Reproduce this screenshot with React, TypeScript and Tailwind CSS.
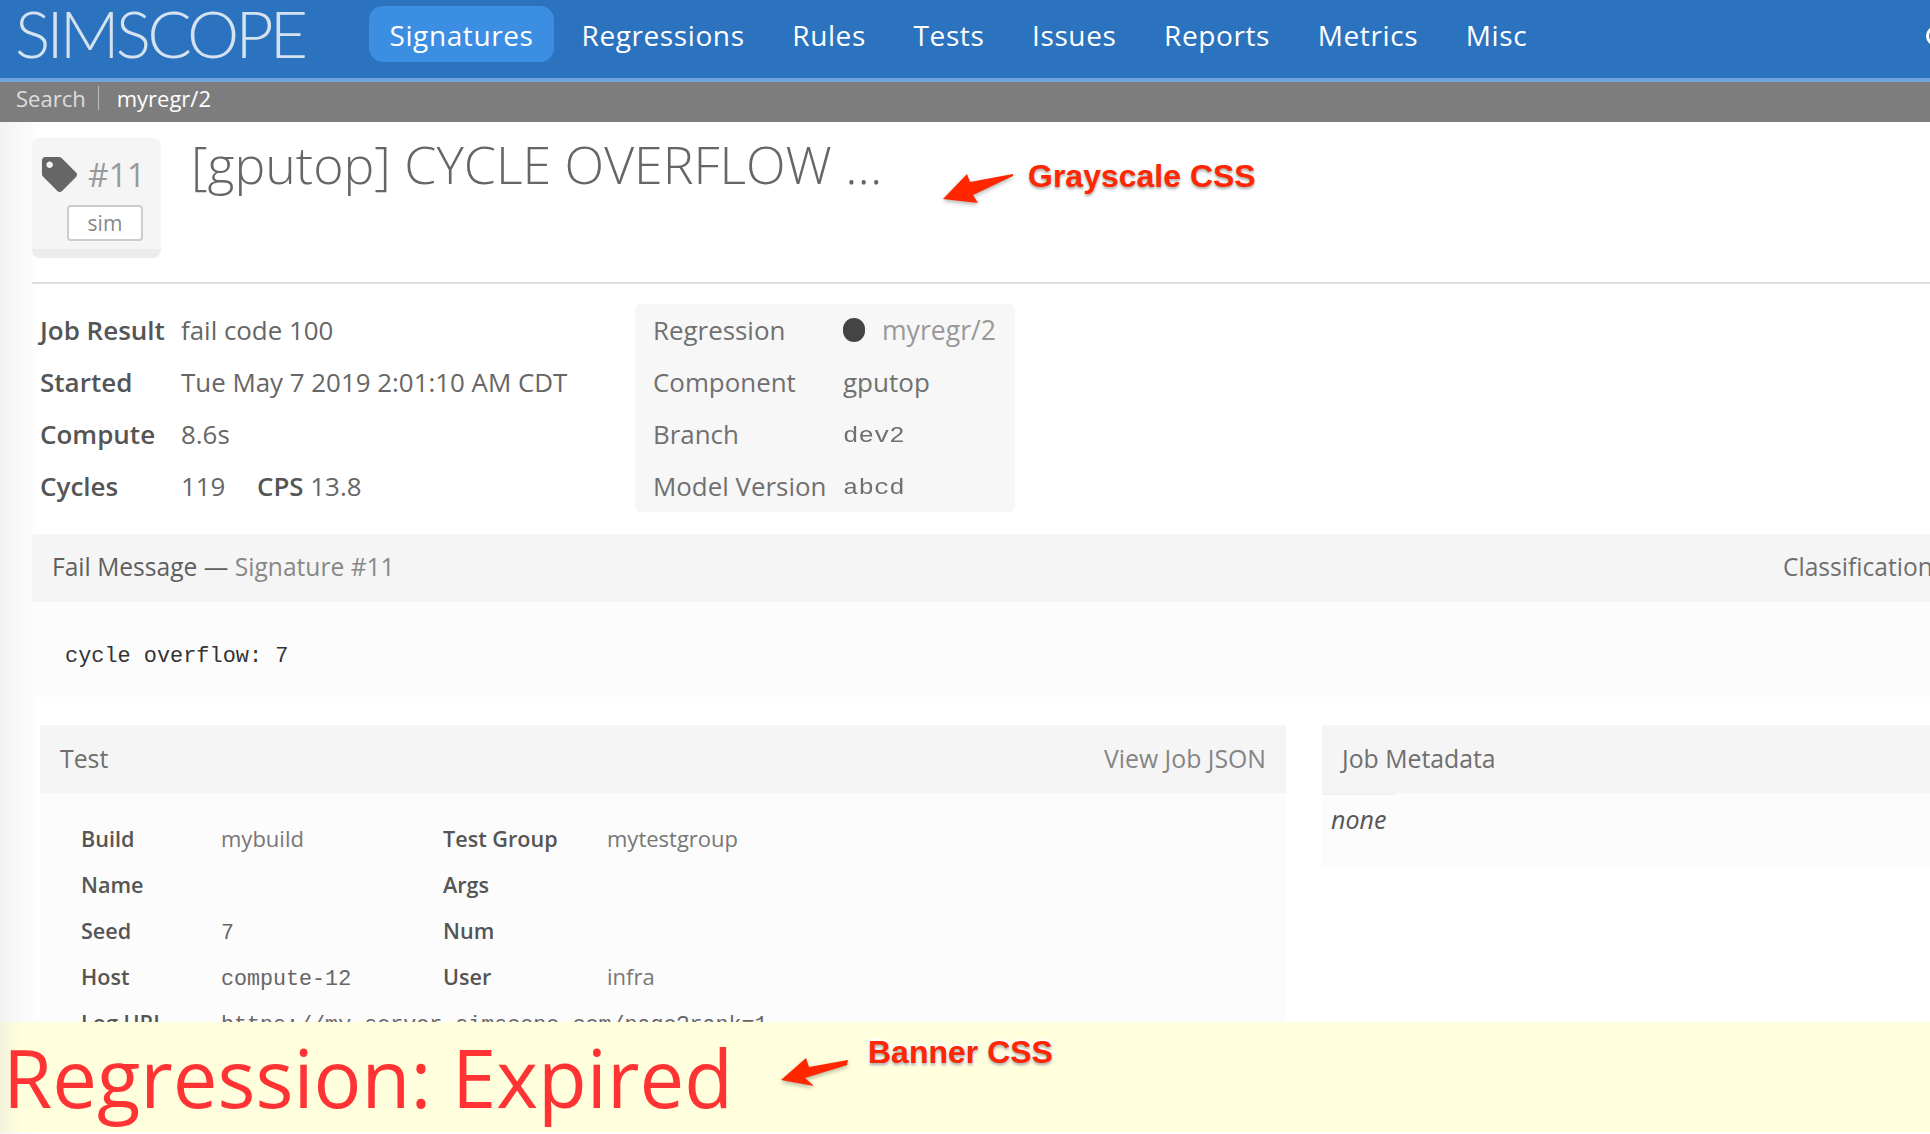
import React from "react";
import { FaTag } from "react-icons/fa";

const NAV = ["Signatures", "Regressions", "Rules", "Tests", "Issues", "Reports", "Metrics", "Misc"];

function Field({ label, children }: { label: string; children?: React.ReactNode }) {
  return (
    <div className="flex h-[52px] items-center">
      <div className="w-[141px] font-semibold text-[#555]">{label}</div>
      <div className="whitespace-nowrap pt-[1px] text-[25.9px] text-[#666]">{children}</div>
    </div>
  );
}

function Meta({ label, children }: { label: string; children?: React.ReactNode }) {
  return (
    <div className="flex h-[52px] items-center">
      <div className="w-[190px] pt-[1px] text-[25.9px] text-[#707070]">{label}</div>
      <div className="flex items-center whitespace-nowrap text-[#707070]">{children}</div>
    </div>
  );
}

function Mono({ children }: { children: string }) {
  return (
    <span className="inline-block origin-left scale-x-[1.17] pt-[6px] font-['Liberation_Mono',monospace] text-[22px]">{children}</span>
  );
}

function TestRow({ a, b, aMono }: { a: [string, string?]; b: [string, string?]; aMono?: boolean }) {
  return (
    <div className="flex h-[46px] items-center">
      <div className="flex w-[362px] items-center">
        <div className="w-[140px] shrink-0 pt-[1px] text-[21.6px] font-semibold text-[#555]">{a[0]}</div>
        {a[1] ? (
          <div className={aMono ? "whitespace-nowrap pt-[7px] font-['Liberation_Mono',monospace] text-[21.7px] text-[#666]" : "whitespace-nowrap text-[#777]"}>{a[1]}</div>
        ) : null}
      </div>
      <div className="w-[164px] pt-[1px] text-[21.6px] font-semibold text-[#555]">{b[0]}</div>
      {b[1] ? <div className="text-[#777]">{b[1]}</div> : null}
    </div>
  );
}

function Arrow({ points, className }: { points: string; className: string }) {
  return (
    <svg className={className} viewBox="0 0 80 40" fill="#ff2600" style={{ filter: "drop-shadow(0 2px 2px rgba(0,0,0,0.3))" }}>
      <polygon points={points} />
    </svg>
  );
}

const outline = "[text-shadow:0_2px_3px_rgba(0,0,0,0.35),1px_1px_0_#fff,-1px_-1px_0_#fff,1px_-1px_0_#fff,-1px_1px_0_#fff,2px_0_0_#fff,-2px_0_0_#fff,0_2px_0_#fff,0_-2px_0_#fff]";

export default function App() {
  return (
    <div className="relative h-[1134px] w-[1930px] overflow-hidden bg-white font-['Open_Sans',sans-serif] text-[26px] leading-none">
      <nav className="flex h-[82px] items-start border-b-4 border-[#70a3e0] bg-[#2b73bf] pt-[6px]">
        <div className="ml-[15px] mt-[-8px] w-[354px] font-['Lato',sans-serif] text-[66px] font-light leading-[70px] tracking-[-3.9px] text-[#d5e2ef]">SIMSCOPE</div>
        <div className="flex items-center text-[28px] tracking-[0.6px] text-white">
          {NAV.map((n, i) => (
            <div key={n} className={i === 0 ? "mr-[27.5px] flex h-[56px] w-[185px] items-center justify-center rounded-[14px] bg-[#3c8ee2] pt-[2px]" : "mr-[47.7px] flex h-[56px] items-center whitespace-nowrap pt-[2px]"}>
              {n}
            </div>
          ))}
        </div>
        <div className="absolute left-[1926px] top-[26px] h-[20px] w-[20px] rounded-full border-[3px] border-white" />
      </nav>

      <div className="flex h-[40px] items-center bg-[#7d7d7d] pb-[8px] pl-4 text-[22px]">
        <span className="text-[#ddd]">Search</span>
        <span className="ml-[12px] mr-[18px] h-[24px] w-px bg-[#bbb]" />
        <span className="text-white">myregr/2</span>
      </div>

      <main className="h-[1012px] bg-[linear-gradient(90deg,#f3f3f3_0,#ffffff_42px)] pl-8 pt-4">
        <div className="flex h-[144px] items-start gap-[30px]">
          <div className="h-[120px] w-[129px] rounded-lg border-b-[9px] border-[#ececec] bg-[#f5f5f5] pl-[10px] pt-[19px]">
            <div className="flex items-center gap-[11px]">
              <FaTag className="h-[35px] w-[35px] text-[#666]" />
              <span className="text-[32px] text-[#999]">#11</span>
            </div>
            <div className="ml-[25px] mt-[13px] flex h-[36px] w-[76px] items-center justify-center rounded-[4px] border-2 border-[#ccc] bg-white text-[21px] text-[#888]">sim</div>
          </div>
          <h1 className="mt-[1px] whitespace-nowrap text-[51.8px] font-light leading-[50px] text-[#666]">[gputop] CYCLE OVERFLOW ...</h1>
        </div>
        <div className="h-[2px] bg-[#ddd]" />

        <div className="ml-2 mt-5 flex">
          <div className="w-[595px]">
            <Field label="Job Result">fail code 100</Field>
            <Field label="Started">Tue May 7 2019 2:01:10 AM CDT</Field>
            <Field label="Compute">8.6s</Field>
            <Field label="Cycles">
              <span className="inline-block w-[76px]">119</span>
              <span className="font-semibold text-[#555]">CPS</span> 13.8
            </Field>
          </div>
          <div className="h-[208px] w-[380px] rounded-md bg-[#f7f7f7] pl-[18px]">
            <Meta label="Regression">
              <span className="mr-[17px] h-[24px] w-[22px] rounded-full bg-[#444]" />
              <span className="text-[26.6px] text-[#999]">myregr/2</span>
            </Meta>
            <Meta label="Component">gputop</Meta>
            <Meta label="Branch"><Mono>dev2</Mono></Meta>
            <Meta label="Model Version"><Mono>abcd</Mono></Meta>
          </div>
        </div>

        <section className="mt-[22px]">
          <div className="flex h-[68px] items-center justify-between bg-[#f5f5f5] pb-[1px] pl-5 text-[24.6px]">
            <div className="font-medium text-[#5f5f5f]">
              Fail Message — <span className="text-[#888]">Signature #11</span>
            </div>
            <div className="w-[147px] overflow-hidden whitespace-nowrap font-medium text-[#6f6f6f]">Classification</div>
          </div>
          <div className="flex h-[95px] items-center bg-[#fcfcfc] pl-[33px] pt-[14px] font-['Liberation_Mono',monospace] text-[21.9px] text-[#333]">cycle overflow: 7</div>
        </section>

        <div className="ml-2 mt-7 flex gap-9">
          <section className="w-[1246px] bg-[#fcfcfc]">
            <div className="flex h-[68px] items-center justify-between bg-[#f5f5f5] px-5 pb-[1px] text-[24.8px]">
              <span className="font-medium text-[#6f6f6f]">Test</span>
              <span className="font-medium text-[#858585]">View Job JSON</span>
            </div>
            <div className="pl-[41px] pt-[22px] text-[22px]">
              <TestRow a={["Build", "mybuild"]} b={["Test Group", "mytestgroup"]} />
              <TestRow a={["Name"]} b={["Args"]} />
              <TestRow a={["Seed", "7"]} aMono b={["Num"]} />
              <TestRow a={["Host", "compute-12"]} aMono b={["User", "infra"]} />
              <TestRow a={["Log URL", "https://my-server.simscope.com/page?rank=1"]} aMono b={[""]} />
            </div>
          </section>
          <section className="w-[608px] self-start">
            <div className="flex h-[68px] items-center bg-[#f5f5f5] pb-[1px] pl-5 text-[24.8px] font-medium text-[#6f6f6f]">Job Metadata</div>
            <div className="h-[76px] bg-[#fcfcfc]">
              <div className="h-[2px] w-[73px] bg-[#f2f2f2]" />
              <div className="pl-[9px] pt-[12px] text-[25px] italic text-[#555]">none</div>
            </div>
          </section>
        </div>
      </main>

      <div className="absolute bottom-[2px] left-0 flex h-[110px] w-[1930px] items-center bg-[linear-gradient(90deg,#f3f3dc_0,#ffffdd_20px)] pl-[3px] pt-[2px] text-[79.7px] text-[#ff3333]">
        Regression: Expired
      </div>

      <Arrow className="absolute left-[940px] top-[170px] h-[40px] w-[80px]" points="3,29 27,4 30,12 73,4 73,6 33,25 38,33" />
      <div className={`absolute left-[1028px] top-[158px] font-['Liberation_Sans',sans-serif] text-[32px] font-bold leading-[36px] text-[#ff2600] ${outline}`}>Grayscale CSS</div>
      <Arrow className="absolute left-[778px] top-[1052px] h-[40px] w-[80px]" points="3,28 28,6 31,15 70,8 69,13 27,26 36,34" />
      <div className={`absolute left-[868px] top-[1034px] font-['Liberation_Sans',sans-serif] text-[32px] font-bold leading-[36px] text-[#ff2600] ${outline}`}>Banner CSS</div>
    </div>
  );
}
